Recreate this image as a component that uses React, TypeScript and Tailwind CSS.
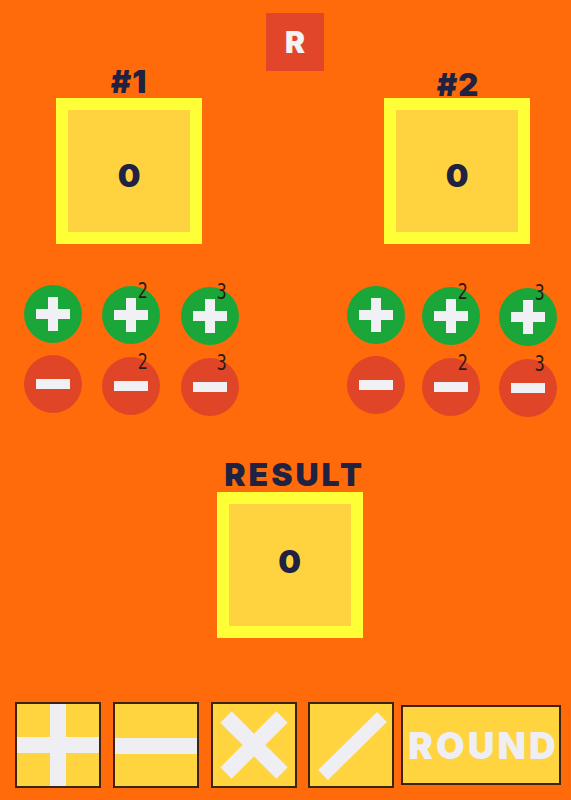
import React from 'react';

const heavy = { fontFamily: 'Inter, "DejaVu Sans", "Liberation Sans", sans-serif' };

function NumberBox({ value, shift }: { value: number; shift: string }) {
  return (
    <div className="w-[146px] h-[146px] border-[12px] border-[#FFFF38] bg-[#FFD33F] flex items-center justify-center">
      <span className={`text-[32px] leading-[32px] font-black text-[#1F2240] ${shift}`}>
        {value}
      </span>
    </div>
  );
}

function Sup({ n }: { n: number }) {
  return (
    <span
      className="absolute left-[34px] top-[-6px] text-[22px] leading-[22px] text-[#2A1A12] scale-x-75"
      style={{ fontFamily: '"DejaVu Sans Mono", monospace' }}
    >
      {n}
    </span>
  );
}

function Circle({ kind, n, extra }: { kind: 'plus' | 'minus'; n?: number; extra: string }) {
  const bg = kind === 'plus' ? 'bg-[#1BA63A]' : 'bg-[#E04527]';
  return (
    <div className={`relative w-[58px] h-[58px] rounded-full ${bg} flex items-center justify-center ${extra}`}>
      {kind === 'plus' ? (
        <svg width="34" height="34" viewBox="0 0 34 34">
          <rect x="12" y="0" width="10" height="34" fill="#F0F0F5" />
          <rect x="0" y="12" width="34" height="10" fill="#F0F0F5" />
        </svg>
      ) : (
        <div className="w-[34px] h-[10px] bg-[#F0F0F5]" />
      )}
      {n && <Sup n={n} />}
    </div>
  );
}

function Group({ gaps }: { gaps: [string, string] }) {
  return (
    <div className="flex flex-col gap-[10px]">
      <div className="flex items-start">
        <Circle kind="plus" extra="" />
        <Circle kind="plus" n={2} extra={`${gaps[0]} mt-[1px]`} />
        <Circle kind="plus" n={3} extra={`${gaps[1]} mt-[2px]`} />
      </div>
      <div className="flex items-start">
        <Circle kind="minus" extra="" />
        <Circle kind="minus" n={2} extra={`${gaps[0]} mt-[2px]`} />
        <Circle kind="minus" n={3} extra={`${gaps[1]} mt-[3px]`} />
      </div>
    </div>
  );
}

function OpButton({ children, extra }: { children: React.ReactNode; extra: string }) {
  return (
    <div className={`w-[86px] h-[86px] border-2 border-[#3A2414] bg-[#FFD43F] ${extra}`}>
      <svg width="82" height="82" viewBox="0 0 82 82" className="block">
        {children}
      </svg>
    </div>
  );
}

export default function App() {
  const bar = '#EEEEF3';
  return (
    <div className="w-[571px] h-[800px] bg-[#FF6B0B] flex flex-col overflow-hidden" style={heavy}>
      <div className="flex justify-center pt-[13px] pl-[19px]">
        <div className="w-[58px] h-[58px] bg-[#E2462A] flex items-center justify-center">
          <span className="text-[30px] leading-[30px] font-black text-[#F3F3F5] tracking-[1px] ml-[1px]">R</span>
        </div>
      </div>

      <div className="flex justify-between pl-[56px] pr-[41px] mt-[-1px]">
        <div className="flex flex-col items-center">
          <div className="text-[31px] leading-[24px] font-black text-[#1F2240] h-[24px] mb-[4px] tracking-[1px]">#1</div>
          <NumberBox value={0} shift="mt-[10px]" />
        </div>
        <div className="flex flex-col items-center">
          <div className="text-[31px] leading-[24px] font-black text-[#1F2240] h-[24px] mt-[3px] mb-[1px] tracking-[1px] ml-[2px]">#2</div>
          <NumberBox value={0} shift="mt-[9px]" />
        </div>
      </div>

      <div className="flex justify-between pl-[24px] pr-[14px] mt-[41px]">
        <Group gaps={['ml-[20px]', 'ml-[21px]']} />
        <div className="mt-[1px]">
          <Group gaps={['ml-[17px]', 'ml-[19px]']} />
        </div>
      </div>

      <div className="flex flex-col items-center mt-[46px] pl-[8px]">
        <div className="text-[32px] leading-[24px] font-black text-[#1F2240] h-[24px] mb-[5px] ml-[10px] tracking-[3px]">RESULT</div>
        <NumberBox value={0} shift="mt-[-6px]" />
      </div>

      <div className="mt-auto mb-[12px] flex items-center pl-[15px]">
        <OpButton extra="">
          <rect x="33" y="0" width="16" height="82" fill={bar} />
          <rect x="0" y="33" width="82" height="16" fill={bar} />
        </OpButton>
        <OpButton extra="ml-[12px]">
          <rect x="0" y="34" width="82" height="16" fill={bar} />
        </OpButton>
        <OpButton extra="ml-[12px]">
          <line x1="13" y1="13" x2="69" y2="69" stroke={bar} strokeWidth="16" />
          <line x1="69" y1="13" x2="13" y2="69" stroke={bar} strokeWidth="16" />
        </OpButton>
        <OpButton extra="ml-[11px]">
          <line x1="72" y1="13" x2="13" y2="71" stroke={bar} strokeWidth="14" />
        </OpButton>
        <div className="ml-[7px] w-[160px] h-[80px] border-2 border-[#3A2414] bg-[#FFD43F] flex items-center justify-center">
          <span className="text-[37px] leading-[37px] font-black text-[#EEEEF4] mt-[1px] tracking-[3px] ml-[5px]">ROUND</span>
        </div>
      </div>
    </div>
  );
}
